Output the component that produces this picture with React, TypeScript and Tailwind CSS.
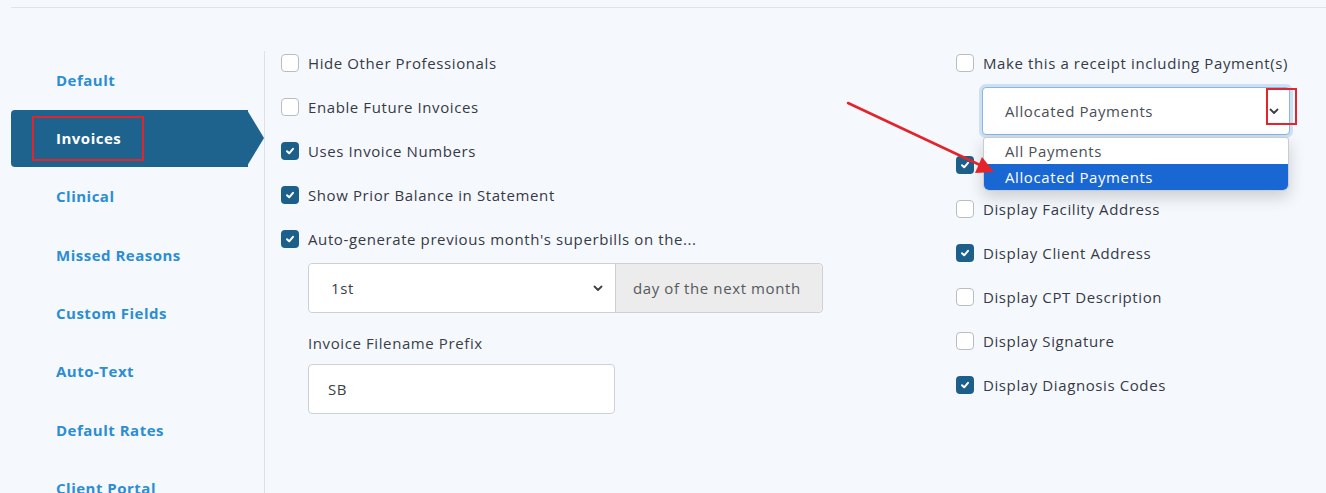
import React from "react";

const font = { fontFamily: '"Open Sans", "Noto Sans", sans-serif' };

function Check({ checked }: { checked?: boolean }) {
  if (checked) {
    return (
      <span className="flex h-[18px] w-[18px] shrink-0 items-center justify-center rounded-[4px] bg-[#1d5f8b]">
        <svg width="10" height="10" viewBox="0 0 10 10">
          <path d="M2 5.2 L4.2 7.3 L8 2.8" fill="none" stroke="white" strokeWidth="2" strokeLinecap="round" strokeLinejoin="round" />
        </svg>
      </span>
    );
  }
  return <span className="h-[18px] w-[18px] shrink-0 rounded-[4px] border border-[#b9bdc2] bg-white" />;
}

function Row({ checked, label }: { checked?: boolean; label?: string }) {
  return (
    <div className="flex h-[24px] items-center gap-[9px] text-[15px] tracking-[0.6px] text-[#353a45]">
      <Check checked={checked} />
      {label ? <span className="whitespace-nowrap">{label}</span> : null}
    </div>
  );
}

function Chevron({ className }: { className?: string }) {
  return (
    <svg className={className} width="10" height="7" viewBox="0 0 10 7">
      <path d="M1.5 1.5 L5 5 L8.5 1.5" fill="none" stroke="#3c3f45" strokeWidth="1.8" strokeLinecap="round" strokeLinejoin="round" />
    </svg>
  );
}

const navItems = ["Default", "Invoices", "Clinical", "Missed Reasons", "Custom Fields", "Auto-Text", "Default Rates", "Client Portal"];

export default function App() {
  return (
    <div className="relative h-[493px] w-[1326px] overflow-hidden bg-[#f5f9fd]" style={font}>
      <div className="ml-[11px] mt-[7px] border-t border-[#dfe4e9]" />
      <div className="mt-[43px] flex">
        {/* Sidebar */}
        <div className="ml-[11px] w-[253px] shrink-0">
          {navItems.map((item) => (
            <div key={item} className="flex h-[58.3px] items-center">
              {item === "Invoices" ? (
                <div className="relative flex h-[57px] w-[237px] items-center rounded-l-[4px] bg-[#1e628e] pl-[45px] text-[15px] font-bold tracking-[0.5px] text-white">
                  {item}
                  <div className="absolute left-[236px] top-0 h-0 w-0 border-y-[28.5px] border-l-[17px] border-y-transparent border-l-[#1e628e]" />
                  <div className="absolute left-[21px] top-[6px] h-[45px] w-[112px] border-2 border-[#e3242b]" />
                </div>
              ) : (
                <span className="pl-[45px] text-[15px] font-bold tracking-[0.5px] text-[#2c8dd4]">{item}</span>
              )}
            </div>
          ))}
        </div>
        {/* Middle column */}
        <div className="min-h-[450px] w-[692px] shrink-0 border-l border-[#dde2e7] pl-[16px]">
          <div className="flex flex-col gap-[20px]">
            <Row label="Hide Other Professionals" />
            <Row label="Enable Future Invoices" />
            <Row checked label="Uses Invoice Numbers" />
            <Row checked label="Show Prior Balance in Statement" />
            <Row checked label="Auto-generate previous month's superbills on the..." />
          </div>
          <div className="ml-[27px] mt-[12px] flex h-[50px] w-[515px] rounded-[4px] border border-[#cdd1d5] text-[15px] tracking-[0.6px]">
            <div className="flex flex-1 items-center justify-between rounded-l-[4px] bg-white pl-[22px] pr-[12px] text-[#3a3f47]">
              <span>1st</span>
              <Chevron />
            </div>
            <div className="flex w-[207px] items-center rounded-r-[4px] border-l border-[#cdd1d5] bg-[#ececec] pl-[17px] text-[#555a60]">
              day of the next month
            </div>
          </div>
          <div className="ml-[27px] mt-[18px] flex h-[24px] items-center text-[15px] tracking-[0.6px] text-[#3a3f47]">Invoice Filename Prefix</div>
          <div className="ml-[27px] mt-[9px] flex h-[50px] w-[307px] items-center rounded-[4px] border border-[#cdd1d5] bg-white pl-[19px] text-[15px] tracking-[0.6px] text-[#3a3f47]">
            SB
          </div>
        </div>
        {/* Right column */}
        <div className="flex-1">
          <Row label="Make this a receipt including Payment(s)" />
          <div className="relative ml-[26px] mt-[12px] w-[308px]">
            <div className="flex h-[48px] items-center justify-between rounded-[4px] border border-[#86b7e5] bg-white pl-[22px] pr-[10px] text-[15px] tracking-[0.6px] text-[#4a4f56] shadow-[0_0_0_3px_#cfe0f2]">
              <span>Allocated Payments</span>
              <Chevron />
            </div>
            <div className="absolute left-[284px] top-[1px] h-[37px] w-[31px] border-2 border-[#e3242b]" />
            <div className="absolute left-[1px] top-[50px] z-10 w-[306px] overflow-hidden rounded-b-[6px] rounded-t-[3px] border border-[#c9cdd2] bg-white text-[15px] tracking-[0.6px] shadow-[0_6px_16px_rgba(0,0,0,0.18)]">
              <div className="flex h-[26px] items-center pl-[21px] text-[#4a4f56]">All Payments</div>
              <div className="flex h-[26px] items-center bg-[#1967d2] pl-[21px] text-white">Allocated Payments</div>
            </div>
          </div>
          <div className="mt-[18px] flex flex-col gap-[20px]">
            <Row checked />
            <Row label="Display Facility Address" />
            <Row checked label="Display Client Address" />
            <Row label="Display CPT Description" />
            <Row label="Display Signature" />
            <Row checked label="Display Diagnosis Codes" />
          </div>
        </div>
      </div>
      {/* Red arrow annotation */}
      <svg className="pointer-events-none absolute left-0 top-0 z-20" width="1326" height="493">
        <line x1="848" y1="103" x2="980" y2="165" stroke="#e3242b" strokeWidth="2.5" strokeLinecap="round" />
        <polygon points="994,172 975,173 982,157" fill="#e3242b" />
      </svg>
    </div>
  );
}
